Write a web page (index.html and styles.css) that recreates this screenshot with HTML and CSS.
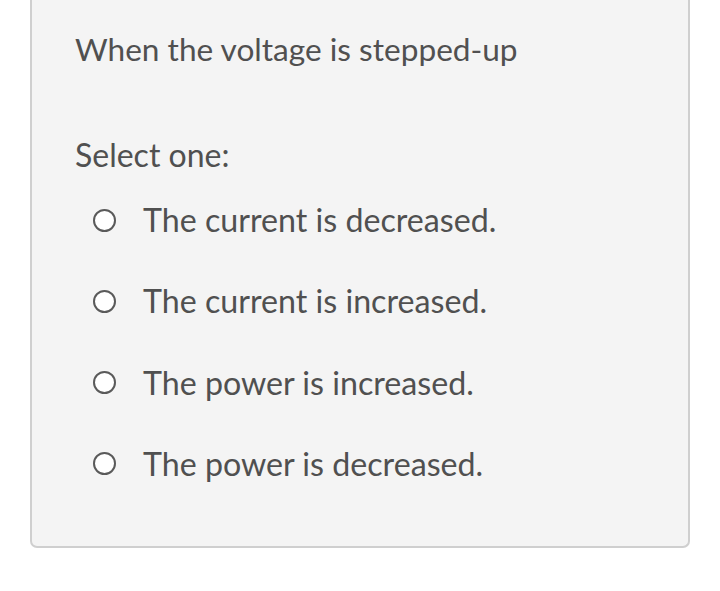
FILE: index.html
```html
<!DOCTYPE html>
<html>
<head>
<meta charset="utf-8">
<link rel="stylesheet" href="styles.css">
</head>
<body>
<div class="card">
  <p class="question">When the voltage is stepped-up</p>
  <p class="prompt">Select one:</p>
  <div class="options">
    <label class="option"><span class="radio"></span><span class="label">The current is decreased.</span></label>
    <label class="option"><span class="radio"></span><span class="label">The current is increased.</span></label>
    <label class="option"><span class="radio"></span><span class="label">The power is increased.</span></label>
    <label class="option"><span class="radio"></span><span class="label">The power is decreased.</span></label>
  </div>
</div>
</body>
</html>
```
FILE: styles.css
```css
html, body {
  margin: 0;
  padding: 0;
  background: #ffffff;
}
body {
  font-family: "Source Sans Pro", Lato, "Liberation Sans", sans-serif;
  color: #505050;
}
.card {
  box-sizing: border-box;
  margin-left: 30px;
  width: 660px;
  height: 548px;
  background: #f4f4f4;
  border: 2px solid #cfcfcf;
  border-top: none;
  border-radius: 0 0 7px 7px;
  padding: 29px 0 0 43px;
}
.question {
  margin: 0;
  font-size: 31.6px;
  line-height: 40px;
}
.prompt {
  margin: 66px 0 0;
  font-size: 32px;
  line-height: 40px;
}
.options {
  margin-top: 25px;
  display: flex;
  flex-direction: column;
  gap: 41.3px;
}
.option {
  display: flex;
  align-items: center;
  font-size: 32.2px;
  line-height: 40px;
}
.radio {
  box-sizing: border-box;
  width: 23px;
  height: 23px;
  border: 2px solid #5a5a5a;
  border-radius: 50%;
  background: #ffffff;
  margin-left: 18px;
  margin-right: 27px;
  flex: none;
}
```
